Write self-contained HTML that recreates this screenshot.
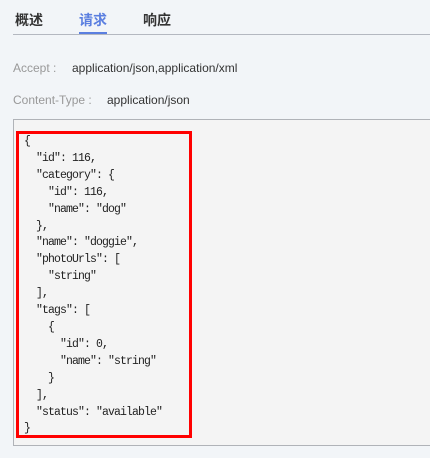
<!DOCTYPE html>
<html><head><meta charset="utf-8"><style>
html,body{margin:0;padding:0;width:430px;height:458px;overflow:hidden;background:#f2f5f8;font-family:"Liberation Sans","Noto Sans CJK SC",sans-serif;}
.tabs{position:absolute;left:13px;top:0;right:0;height:34px;border-bottom:1px solid #b4b8c0;}
.tab{position:absolute;top:10px;font-size:14px;font-weight:bold;color:#333;}
.act{color:#5b7fe0;}
.ul{position:absolute;left:79px;top:32px;width:28px;height:2px;background:#5b7fe0;}
.row{position:absolute;font-size:12px;color:#333;}
.lbl{color:#999;}
.box{position:absolute;left:13px;top:119px;right:0;height:325px;background:#f4f4f4;border-top:1px solid #b0b3b8;border-left:1px solid #b0b3b8;border-bottom:1px solid #b0b3b8;}
.red{position:absolute;left:16px;top:131px;width:170px;height:301px;border:3px solid #f00;}
pre{position:absolute;left:24px;top:134px;margin:0;font-family:"Liberation Mono",monospace;font-size:11.5px;letter-spacing:-0.9px;line-height:16.9px;color:#222;}
</style></head><body>
<div class="tabs"></div>
<div class="tab" style="left:15px">概述</div>
<div class="tab act" style="left:79px">请求</div>
<div class="tab" style="left:143px">响应</div>
<div class="ul"></div>
<div class="row lbl" style="left:13px;top:61px">Accept :</div>
<div class="row" style="left:72px;top:61px">application/json,application/xml</div>
<div class="row lbl" style="left:13px;top:93px">Content-Type :</div>
<div class="row" style="left:107px;top:93px">application/json</div>
<div class="box"></div>
<div class="red"></div>
<pre>{
  "id": 116,
  "category": {
    "id": 116,
    "name": "dog"
  },
  "name": "doggie",
  "photoUrls": [
    "string"
  ],
  "tags": [
    {
      "id": 0,
      "name": "string"
    }
  ],
  "status": "available"
}</pre>
</body></html>
